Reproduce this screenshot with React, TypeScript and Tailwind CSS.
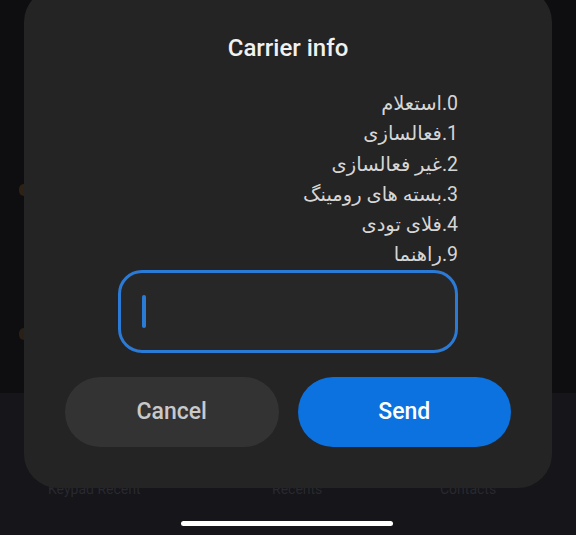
import React from "react";

const items = [
  "0.استعلام",
  "1.فعالسازی",
  "2.غیر فعالسازی",
  "3.بسته های رومینگ",
  "4.فلای تودی",
  "9.راهنما",
];

export default function App() {
  return (
    <div
      className="relative w-[576px] h-[535px] overflow-hidden bg-[#0f0f11]"
      style={{ fontFamily: 'Roboto, "DejaVu Sans", sans-serif' }}
    >
      {/* background page */}
      <div className="flex flex-col h-full">
        <div className="h-[393px] bg-[#0e0e10] flex flex-col pl-[19px] pt-[184px] gap-[132px]">
          <div className="w-[10px] h-[12px] rounded-full bg-[#2e2214]" />
          <div className="w-[10px] h-[12px] rounded-full bg-[#2a2016]" />
        </div>
        <div className="flex-1 bg-[#15151a] flex flex-col">
          <div className="mt-[88px] flex flex-row text-[14px] leading-[16px] text-[#29292e]">
            <div className="w-[190px] pl-[48px]">Keypad Recent</div>
            <div className="w-[200px] pl-[82px]">Recents</div>
            <div className="flex-1 pl-[50px]">Contacts</div>
          </div>
          <div className="mt-auto mb-[9px] flex justify-center">
            <div className="w-[212px] h-[5px] rounded-full bg-white ml-[-2px]" />
          </div>
        </div>
      </div>

      {/* dialog overlay */}
      <div className="absolute left-[24px] top-[-12px] w-[528px] h-[500px] rounded-[34px] bg-[#242424] flex flex-col items-center">
        <div className="mt-[44px] text-[24px] leading-[32px] font-medium text-[#f1f1f1]">
          Carrier info
        </div>
        <div
          dir="rtl"
          className="mt-[25px] w-[340px] flex flex-col text-[19.5px] leading-[30.3px] text-[#d6d6d6]"
        >
          {items.map((t) => (
            <div key={t}>{t}</div>
          ))}
        </div>
        <div className="mt-[-1px] w-[340px] h-[83px] rounded-[24px] border-[3px] border-[#2b7ad6] bg-[#272727] flex items-center pl-[21px]">
          <div className="w-[4px] h-[33px] rounded-full bg-[#2b7ad6]" />
        </div>
        <div className="mt-[24px] w-full px-[41px] flex gap-[19px]">
          <button className="flex-1 h-[70px] rounded-full bg-[#333333] text-[23px] font-medium text-[#c9c9c9] flex items-center justify-center">
            Cancel
          </button>
          <button className="flex-1 h-[70px] rounded-full bg-[#0b72e0] text-[23px] font-medium text-white flex items-center justify-center">
            Send
          </button>
        </div>
      </div>
    </div>
  );
}
